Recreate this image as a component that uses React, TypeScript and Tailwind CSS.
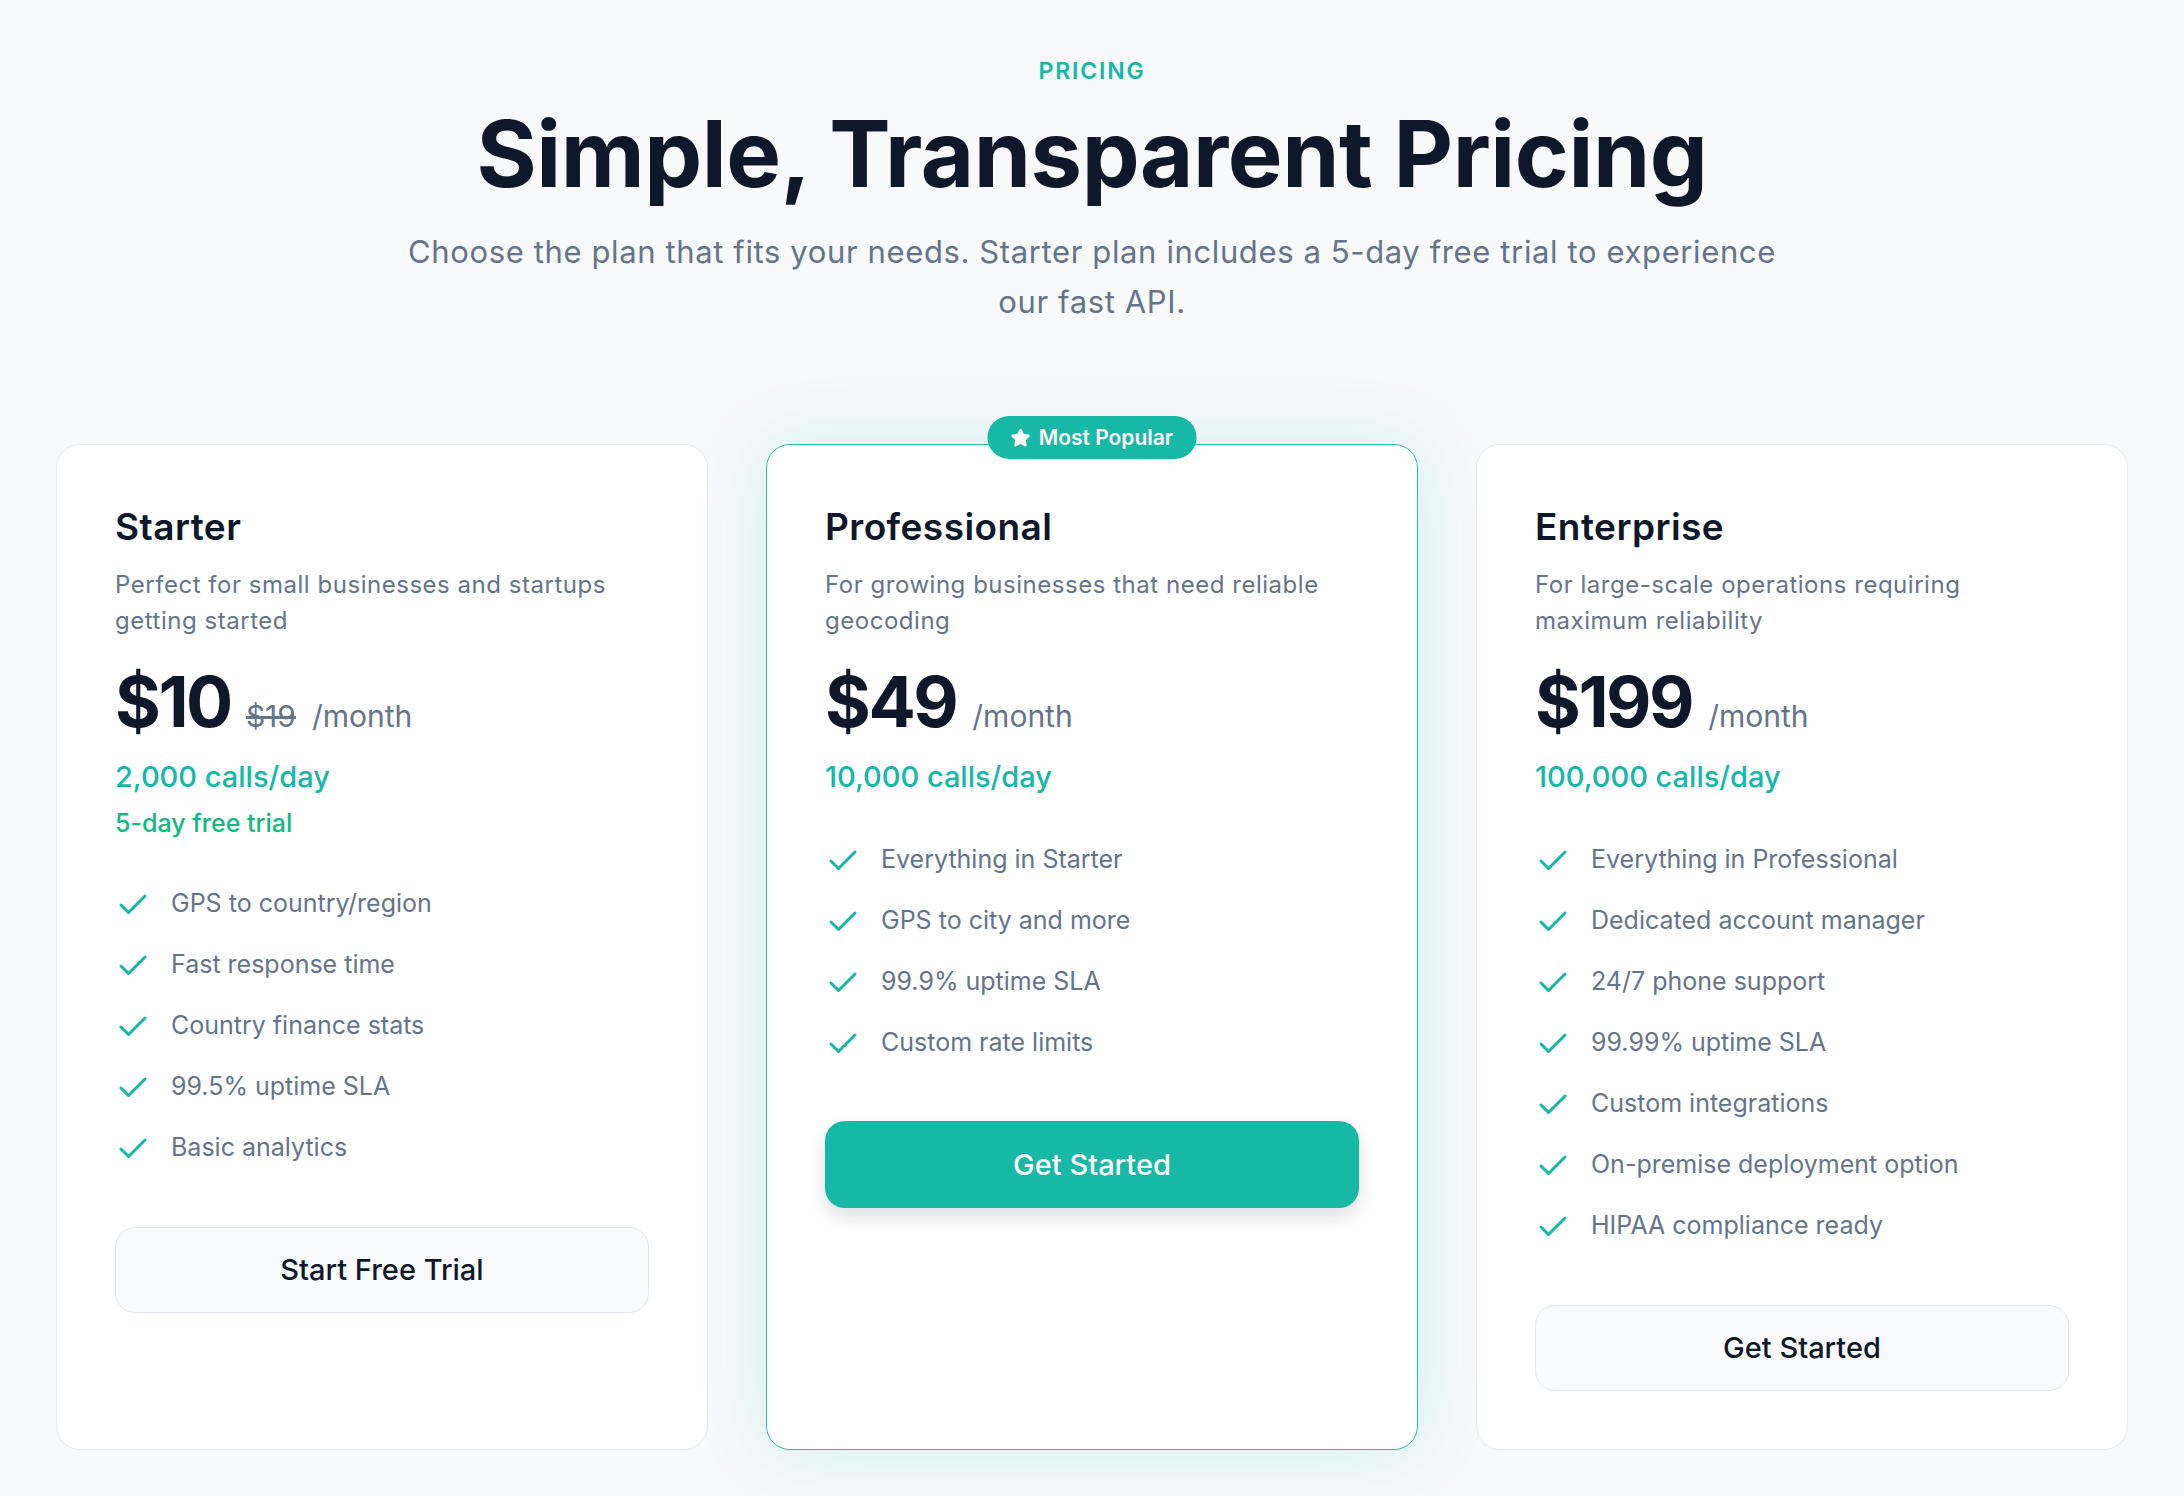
import React from "react";
import { Check, Star } from "lucide-react";

type Plan = {
  name: string;
  blurb: string;
  price: string;
  oldPrice?: string;
  calls: string;
  trial?: string;
  features: string[];
  cta: string;
  popular?: boolean;
};

const plans: Plan[] = [
  {
    name: "Starter",
    blurb: "Perfect for small businesses and startups getting started",
    price: "$10",
    oldPrice: "$19",
    calls: "2,000 calls/day",
    trial: "5-day free trial",
    features: [
      "GPS to country/region",
      "Fast response time",
      "Country finance stats",
      "99.5% uptime SLA",
      "Basic analytics",
    ],
    cta: "Start Free Trial",
  },
  {
    name: "Professional",
    blurb: "For growing businesses that need reliable geocoding",
    price: "$49",
    calls: "10,000 calls/day",
    features: [
      "Everything in Starter",
      "GPS to city and more",
      "99.9% uptime SLA",
      "Custom rate limits",
    ],
    cta: "Get Started",
    popular: true,
  },
  {
    name: "Enterprise",
    blurb: "For large-scale operations requiring maximum reliability",
    price: "$199",
    calls: "100,000 calls/day",
    features: [
      "Everything in Professional",
      "Dedicated account manager",
      "24/7 phone support",
      "99.99% uptime SLA",
      "Custom integrations",
      "On-premise deployment option",
      "HIPAA compliance ready",
    ],
    cta: "Get Started",
  },
];

function PlanCard({ plan }: { plan: Plan }) {
  return (
    <div
      className={
        plan.popular
          ? "relative flex flex-col rounded-[24px] border-[1.5px] border-[#2cbfa9] bg-white px-[58px] pt-[58px] pb-[58px] shadow-[0_0_70px_rgba(20,184,166,0.16)]"
          : "relative flex flex-col rounded-[24px] border border-[#e5e9f0] bg-white px-[58px] pt-[58px] pb-[58px]"
      }
    >
      {plan.popular && (
        <div className="absolute left-1/2 top-[-29px] flex h-[43px] w-[209px] -translate-x-1/2 items-center justify-center gap-[8px] rounded-full bg-[#17b8a6] text-[21px] font-semibold text-white">
          <Star size={20} fill="white" strokeWidth={2} />
          <span>Most Popular</span>
        </div>
      )}

      <h3 className="text-[37px] font-semibold leading-[48px] tracking-[0.012em] text-[#0f172a]">
        {plan.name}
      </h3>
      <p className="mt-[16px] text-[24px] leading-[36px] tracking-[0.022em] text-[#64748b]">
        {plan.blurb}
      </p>

      <div className="mt-[28px] flex items-baseline">
        <span className="text-[70px] font-bold leading-[70px] tracking-[-0.035em] text-[#0f172a]">
          {plan.price}
        </span>
        {plan.oldPrice && (
          <span className="ml-[15px] text-[30px] leading-[45px] text-[#64748b] line-through">
            {plan.oldPrice}
          </span>
        )}
        <span className="ml-[16px] text-[30px] leading-[45px] text-[#64748b]">
          /month
        </span>
      </div>

      <div className="mt-[18px] text-[29px] font-medium leading-[40px] text-[#14b8a6]">
        {plan.calls}
      </div>
      {plan.trial && (
        <div className="mt-[8px] text-[25px] font-medium leading-[36px] text-[#10b981]">
          {plan.trial}
        </div>
      )}

      <ul className="mt-[43px] flex flex-col gap-[22px]">
        {plan.features.map((f) => (
          <li key={f} className="flex items-start gap-[20px]">
            <Check size={36} strokeWidth={2} className="mt-[3px] shrink-0 text-[#14b8a6]" />
            <span className="text-[25px] leading-[39px] text-[#64748b]">{f}</span>
          </li>
        ))}
      </ul>

      <button
        className={
          plan.popular
            ? "mt-[59px] h-[87px] w-full rounded-[20px] bg-[#17b8a6] text-[29px] font-medium text-white shadow-[0_8px_18px_rgba(15,23,42,0.14)]"
            : "mt-[60px] h-[86px] w-full rounded-[20px] border border-[#e2e8f0] bg-[#f8fafc] text-[29px] font-medium text-[#0f172a]"
        }
      >
        {plan.cta}
      </button>
    </div>
  );
}

export default function App() {
  return (
    <div
      className="min-h-screen bg-[#f7f9fb] px-[56px] pt-[55px] pb-[47px]"
      style={{ fontFamily: "Inter, 'Noto Sans', sans-serif" }}
    >
      <div className="flex flex-col items-center text-center">
        <div className="text-[23px] font-semibold uppercase leading-[32px] tracking-[0.08em] text-[#14b8a6]">
          Pricing
        </div>
        <h1 className="mt-[16px] text-[92px] font-bold leading-[101px] tracking-[-0.005em] text-[#0f172a]">
          Simple, Transparent Pricing
        </h1>
        <p className="mt-[23px] max-w-[1400px] text-[31px] leading-[50px] tracking-[0.02em] text-[#64748b]">
          Choose the plan that fits your needs. Starter plan includes a 5-day free trial to
          experience our fast API.
        </p>
      </div>

      <div className="mt-[117px] grid grid-cols-3 gap-[58px]">
        {plans.map((p) => (
          <PlanCard key={p.name} plan={p} />
        ))}
      </div>
    </div>
  );
}
